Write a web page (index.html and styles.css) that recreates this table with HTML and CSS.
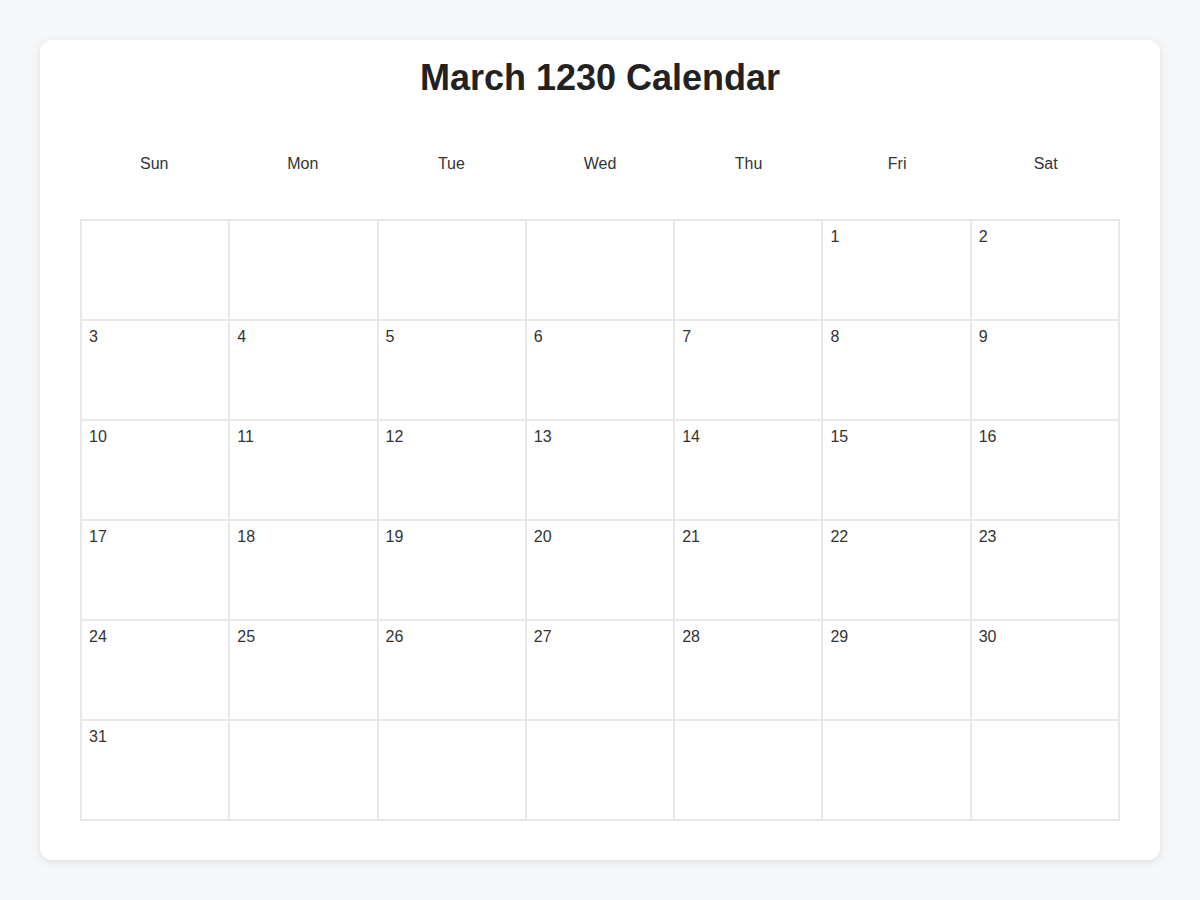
FILE: index.html
```html
<!DOCTYPE html>
<html lang="en">
<head>
<meta charset="utf-8">
<title>March 1230 Calendar</title>
<link rel="stylesheet" href="styles.css">
</head>
<body>
<div class="card">
  <h1 class="title">March 1230 Calendar</h1>
  <div class="weekdays">
    <div class="wd">Sun</div><div class="wd">Mon</div><div class="wd">Tue</div><div class="wd">Wed</div><div class="wd">Thu</div><div class="wd">Fri</div><div class="wd">Sat</div>
  </div>
  <div class="grid">
    <div class="cell"></div><div class="cell"></div><div class="cell"></div><div class="cell"></div><div class="cell"></div><div class="cell">1</div><div class="cell">2</div>
    <div class="cell">3</div><div class="cell">4</div><div class="cell">5</div><div class="cell">6</div><div class="cell">7</div><div class="cell">8</div><div class="cell">9</div>
    <div class="cell">10</div><div class="cell">11</div><div class="cell">12</div><div class="cell">13</div><div class="cell">14</div><div class="cell">15</div><div class="cell">16</div>
    <div class="cell">17</div><div class="cell">18</div><div class="cell">19</div><div class="cell">20</div><div class="cell">21</div><div class="cell">22</div><div class="cell">23</div>
    <div class="cell">24</div><div class="cell">25</div><div class="cell">26</div><div class="cell">27</div><div class="cell">28</div><div class="cell">29</div><div class="cell">30</div>
    <div class="cell">31</div><div class="cell"></div><div class="cell"></div><div class="cell"></div><div class="cell"></div><div class="cell"></div><div class="cell"></div>
  </div>
</div>
</body>
</html>
```
FILE: styles.css
```css
* { box-sizing: border-box; }
html, body { margin: 0; padding: 0; }
body {
  background: #f6f7f9;
  font-family: "Liberation Sans", Arial, sans-serif;
  color: #333;
  padding: 40px;
}
.card {
  width: 1120px;
  height: 820px;
  background: #fff;
  border-radius: 12px;
  box-shadow: 0 2px 10px rgba(0, 0, 0, 0.1);
  padding: 17px 40px 40px;
}
.title {
  margin: 0;
  text-align: center;
  font-size: 36px;
  line-height: 42px;
  font-weight: 700;
  color: #222;
}
.weekdays {
  display: grid;
  grid-template-columns: repeat(7, 1fr);
  padding: 56px 0 46px;
}
.wd {
  text-align: center;
  font-size: 16px;
  line-height: 18px;
  color: #333;
}
.grid {
  display: grid;
  grid-template-columns: repeat(7, 1fr);
  grid-auto-rows: 100px;
  border: 1px solid #e8e8e8;
}
.cell {
  border: 1px solid #e8e8e8;
  padding: 7px 7px;
  font-size: 16px;
  line-height: 18px;
  color: #333;
}
```
